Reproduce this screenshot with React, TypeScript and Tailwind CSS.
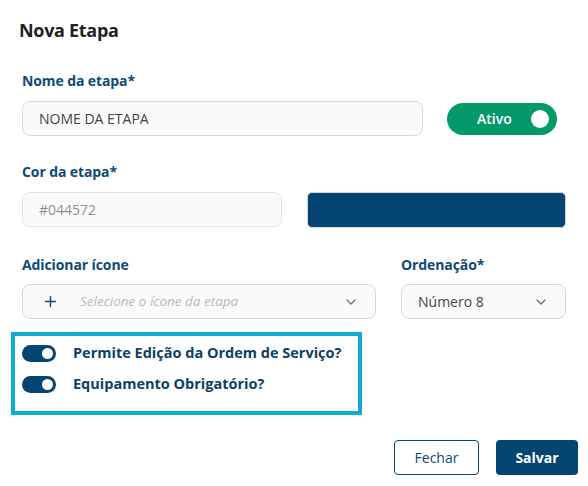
import { ChevronDown, Plus } from "lucide-react";

const font = { fontFamily: '"Open Sans", "Noto Sans", sans-serif' };

const Label = ({ children }: { children: React.ReactNode }) => (
    <p className="text-[14px] leading-5 font-bold text-[#0d4a75] tracking-[-0.1px]">{children}</p>
);

const Switch = () => (
    <div className="flex items-center justify-end w-[34px] h-[17px] rounded-full bg-[#044572] pr-[3px]">
        <div className="w-[11px] h-[11px] rounded-full bg-white" />
    </div>
);

export default function App() {
    return (
        <div className="w-[588px] h-[486px] bg-white relative" style={font}>
            <div className="flex flex-col pl-[22px] pr-[22px]">
                <h1 className="mt-[18px] -ml-[3px] text-[18px] leading-6 font-bold text-[#222] tracking-[-0.3px]">Nova Etapa</h1>

                <div className="mt-[29px]">
                    <Label>Nome da etapa*</Label>
                </div>
                <div className="mt-[10px] flex items-center gap-[24px]">
                    <div className="w-[401px] h-[35px] rounded-[8px] border border-[#d7d9e0] bg-[#fafafa] flex items-center px-[16px] text-[14px] text-[#444]">
                        NOME DA ETAPA
                    </div>
                    <div className="w-[110px] h-[32px] rounded-full bg-[#03996a] flex items-center pl-[30px] pr-[8px] justify-between">
                        <span className="text-[14px] font-semibold text-white">Ativo</span>
                        <div className="w-[18px] h-[18px] rounded-full bg-white" />
                    </div>
                </div>

                <div className="mt-[26px]">
                    <Label>Cor da etapa*</Label>
                </div>
                <div className="mt-[10px] grid grid-cols-2 gap-[25px]">
                    <div className="h-[35px] rounded-[8px] border border-[#e2e4e9] bg-[#fafafa] flex items-center px-[16px] text-[14px] text-[#8f8f8f]">
                        #044572
                    </div>
                    <div className="h-[36px] rounded-[5px] bg-[#044572] border border-[#d0d4dc]" />
                </div>

                <div className="mt-[27px] flex gap-[25px]">
                    <div className="w-[354px]">
                        <Label>Adicionar ícone</Label>
                        <div className="mt-[9px] h-[35px] rounded-[8px] border border-[#d7d9e0] bg-[#fafafa] flex items-center pl-[19px] pr-[16px]">
                            <Plus size={17} strokeWidth={2} className="text-[#0d4a75]" />
                            <span className="ml-[21px] text-[13.5px] italic text-[#b9b9b9] flex-1">Selecione o ícone da etapa</span>
                            <ChevronDown size={16} strokeWidth={2} className="text-[#707070]" />
                        </div>
                    </div>
                    <div className="w-[165px]">
                        <Label>Ordenação*</Label>
                        <div className="mt-[9px] h-[35px] rounded-[8px] border border-[#d7d9e0] bg-[#fafafa] flex items-center pl-[16px] pr-[16px]">
                            <span className="text-[14px] text-[#444] flex-1">Número 8</span>
                            <ChevronDown size={16} strokeWidth={2} className="text-[#707070]" />
                        </div>
                    </div>
                </div>
            </div>

            <div className="ml-[11px] mt-[13px] w-[351px] h-[83px] border-[4px] border-[#0cadd0] flex flex-col pl-[7px] pt-[7px] gap-[11px]">
                <div className="flex items-center gap-[17px] h-[20px]">
                    <Switch />
                    <span className="text-[14.5px] leading-5 font-bold text-[#0d3f62]">Permite Edição da Ordem de Serviço?</span>
                </div>
                <div className="flex items-center gap-[17px] h-[20px]">
                    <Switch />
                    <span className="text-[14.5px] leading-5 font-bold text-[#0d3f62]">Equipamento Obrigatório?</span>
                </div>
            </div>

            <div className="mt-[25px] flex justify-end gap-[17px] pr-[10px]">
                <button className="w-[85px] h-[35px] rounded-[4px] border border-[#044572] bg-white text-[14px] text-[#0d4a75]">Fechar</button>
                <button className="w-[82px] h-[35px] rounded-[4px] bg-[#044572] text-[14px] font-bold text-white">Salvar</button>
            </div>
        </div>
    );
}
